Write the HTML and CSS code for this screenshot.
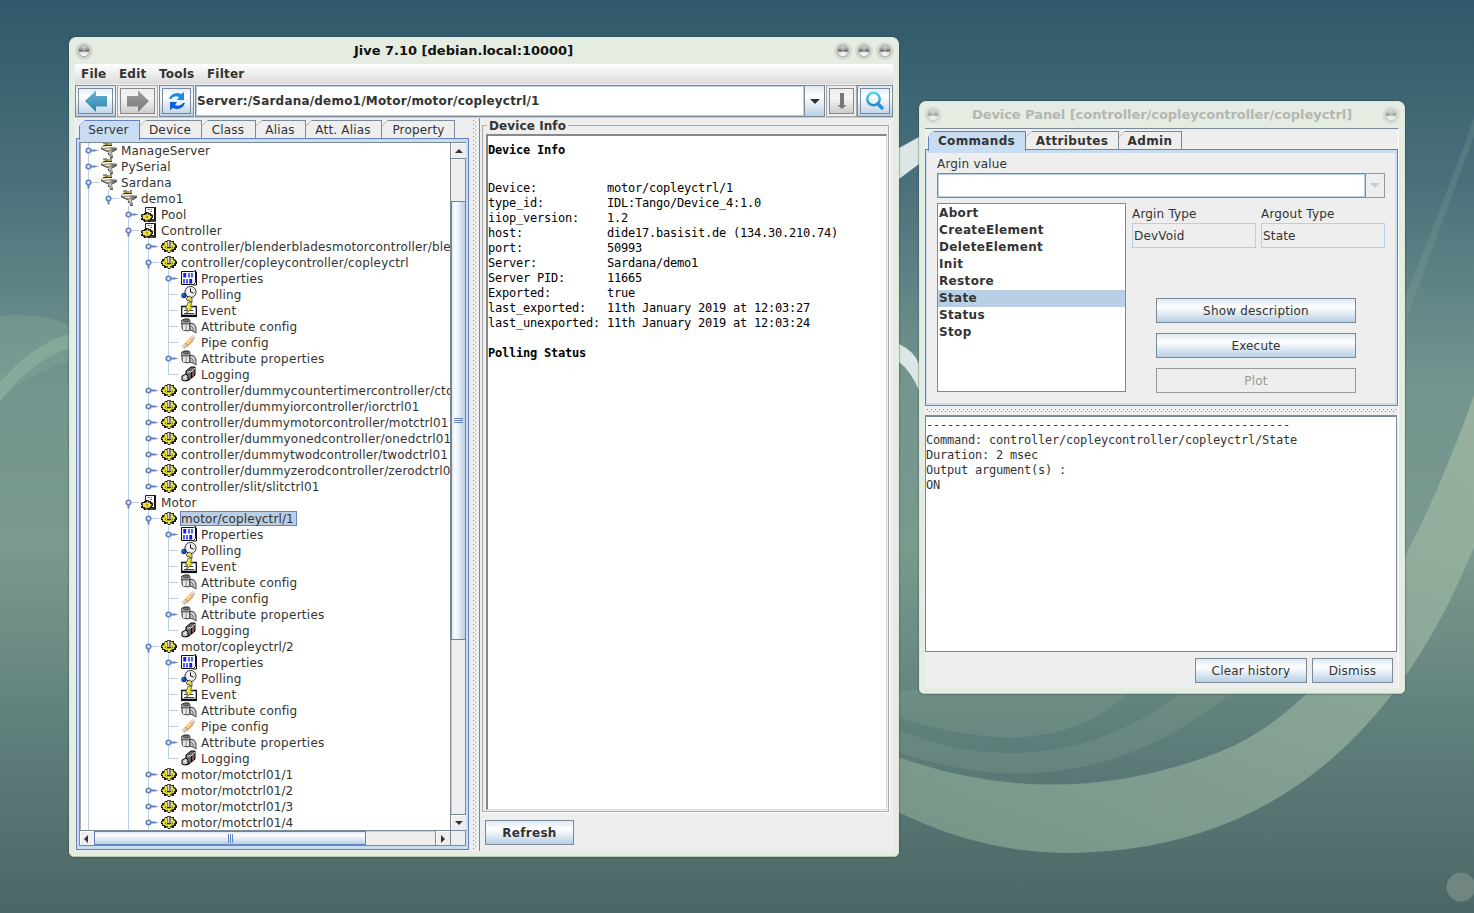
FILE: index.html
```html
<!DOCTYPE html>
<html lang="en">
<head>
<meta charset="utf-8">
<title>Jive 7.10</title>
<link rel="stylesheet" href="styles.css">
</head>
<body>
<svg class="wallpaper" viewBox="0 0 1474 913" preserveAspectRatio="none">
  <defs>
    <linearGradient id="sky" x1="0" y1="0" x2="0" y2="1"><stop offset="0" stop-color="#31586a"/><stop offset=".2" stop-color="#4a717b"/><stop offset=".42" stop-color="#74958f"/><stop offset=".6" stop-color="#7a9a8e"/><stop offset=".8" stop-color="#5f7f7b"/><stop offset="1" stop-color="#4b6765"/></linearGradient>
    <linearGradient id="band" x1="0" y1="1" x2="1" y2="0"><stop offset="0" stop-color="#7f9f8f"/><stop offset="1" stop-color="#a0b7a4"/></linearGradient>
    <linearGradient id="ball" x1="0" y1="0" x2="0" y2="1"><stop offset="0" stop-color="#d8d8d8"/><stop offset=".4" stop-color="#8a8a8a"/><stop offset=".5" stop-color="#555"/><stop offset=".6" stop-color="#ddd"/><stop offset="1" stop-color="#fff"/></linearGradient>
    <linearGradient id="blueArrow" x1="0" y1="0" x2="0" y2="1"><stop offset="0" stop-color="#6db3d2"/><stop offset="1" stop-color="#2a86b0"/></linearGradient>
    <linearGradient id="greyArrow" x1="0" y1="0" x2="0" y2="1"><stop offset="0" stop-color="#a0a0a0"/><stop offset="1" stop-color="#777"/></linearGradient>
    <linearGradient id="lens" x1="0" y1="0" x2="0" y2="1"><stop offset="0" stop-color="#58cfee"/><stop offset="1" stop-color="#268fd0"/></linearGradient>
  </defs>
  <rect width="1474" height="913" fill="url(#sky)"/>
  <path d="M0 316Q40 312 72 326V360Q25 375 0 400Z" fill="#86a898" opacity=".4"/>
  <path d="M0 383Q30 345 72 333V347Q28 362 0 402Z" fill="#9bbda5" opacity=".45"/>
  <path d="M898 757Q1060 815 1222 751Q1370 690 1474 395V547Q1350 853 1065 853Q980 852 898 812Z" fill="url(#band)" opacity=".8"/>
  <path d="M898 690H1130Q1090 735 1010 738Q950 735 898 717Z" fill="#91ae9b" opacity=".22"/>
  <path d="M898 730Q1050 790 1180 694H1230Q1080 815 898 752Z" fill="#91ae9b" opacity=".2"/>
  <path d="M1404 300Q1452 180 1474 118V136Q1440 230 1404 325Z" fill="#91ae9b" opacity=".2"/>
  <path d="M899 148L919 137V164L899 179ZM899 344Q914 351 919 364V390Q910 370 899 362Z" fill="#dce6e4"/>
  <circle cx="1461" cy="887" r="14.500" fill="#83958f" opacity=".65"/>
</svg>

<svg class="defs" width="0" height="0">
  <symbol id="closed" viewBox="0 0 17 16"><path d="M6 8.500h9" stroke="#b8cfe5"/><path d="M7 8.500h4.500" stroke="#6382bf" stroke-width="2"/><path d="M11 8.500h2" stroke="#6382bf"/><circle cx="4.500" cy="8.500" r="2.200" fill="#fff" stroke="#6382bf" stroke-width="1.700"/></symbol>
  <symbol id="opened" viewBox="0 0 17 16"><path d="M7 8.500h8" stroke="#b8cfe5"/><path d="M4.500 10v4.500" stroke="#6382bf" stroke-width="2"/><circle cx="4.500" cy="8.500" r="2.200" fill="#fff" stroke="#6382bf" stroke-width="1.700"/></symbol>
  <symbol id="leaf" viewBox="0 0 17 16"><path d="M4 8.500h10" stroke="#b8cfe5"/></symbol>
  <symbol id="tray" viewBox="0 0 16 16"><path d="M3 1h3v3H3zM7 1h3v3H7z" fill="#eee24a"/><path d="M2 1h2M5 0v3M6 2h2M9 0h1v3M2 3.500h9" stroke="#333" fill="none"/><path d="M0 4.500l10 .5 6 .5v2L11 10v2l1 1v2.500H9L7.500 12V9.500L2 8 0 6z" fill="#98948a"/><path d="M1 5.500l8 .5M4 7.500h5M9 9v4" stroke="#e6e2d8" fill="none"/><path d="M0 6.500l7.500 3.500M9 15.500h3M11 10l5-3M11 7h4M7.500 11v2" stroke="#55534d" fill="none" stroke-width="1.200"/></symbol>
  <symbol id="class" viewBox="0 0 16 16"><path d="M4.500 1.500h9v12h-9z" fill="#fff" stroke="#222"/><path d="M14.200 1v14H7" fill="none" stroke="#000" stroke-width="1.400"/><path d="M7 3.500h4M9 5.500h3" stroke="#3c55ff" stroke-dasharray="2 1"/><path d="M1 8h2V7h1l1-1h2l1 1h2v1l2 1v3h-1v2H9v2H7l-1-1-1 1H3l-1-2H0v-2h1v-1H0V9z" fill="#16150c"/><path d="M2 9h2V8l1 1 1.500-2 1 2 1.500-1v2l2 .5-1 1v1L9 12v2l-1-1-1 1.500-1-1L4.500 15 4 13H2v-2L1 10z" fill="#f1e334"/><path d="M5 11h2" stroke="#444"/></symbol>
  <symbol id="device" viewBox="0 0 16 16"><path d="M4 3h2V2h4v1h3v2l2 1v1h1v3h-1v2h-2v2h-2l-1-1-1 2H7l-1-2-1 1H3v-2H1v-2H0V7h1V5h2z" fill="#1e1d14"/><path d="M4 4h2v2h4V4h2v2l2 1v2h-1v2h-2v1H9.500L9 14H7l-.5-2H4v-1H2V9H1V7.500h2z" fill="#e9df3e"/><path d="M4.500 8v2h7V8" fill="none" stroke="#8d861a"/><path d="M6 2.500h4v6H6z" fill="#777"/><path d="M7.500 3v5" stroke="#ddd"/><path d="M6 9h4v1H6z" fill="#33322a"/></symbol>
  <symbol id="props" viewBox="0 0 16 16"><path d="M.5 1.500h12l2-1v12l-2 2H.5z" fill="#fff" stroke="#111"/><path d="M14 1l1.500 1v13H12" fill="none" stroke="#111"/><path d="M3 3.700h1.500v3H3zM8 3v4.500M11 3v4.500M3 9v4.500M6 9v4.500M9 9.700h1.500v3H9z" fill="none" stroke="#0b16f0" stroke-width="1.400"/></symbol>
  <symbol id="poll" viewBox="0 0 16 16"><circle cx="9.500" cy="6" r="5.600" fill="#f6f6f6" stroke="#333"/><circle cx="9.500" cy="6" r="4.200" fill="none" stroke="#777" stroke-width=".8" stroke-dasharray=".6 1.700"/><path d="M9.500 2.500V6l3 1" fill="none" stroke="#000"/><circle cx="3" cy="9.500" r="2.700" fill="#1730b8"/><path d="M1 9l2-2 .5 3z" fill="#1e9c32"/><path d="M5 13l3-3 3 2v4H9l-1-2-1 1z" fill="#f1e334" stroke="#111" stroke-width=".7"/></symbol>
  <symbol id="event" viewBox="0 0 16 16"><path d="M.7 4.500h14.600v9H.7z" fill="#fff" stroke="#111" stroke-width="1.300"/><path d="M0 14h16" stroke="#111" stroke-width="2.200"/><path d="M3 8.500h9M3 11.500h10" stroke="#444"/><path d="M7 .5h4L9.500 4.500H12l-7 8 2-5.500H4.500z" fill="#f3e739" stroke="#444" stroke-width=".7"/></symbol>
  <symbol id="attr" viewBox="0 0 16 16"><path d="M1 2l3-1h4l1 2v9l-2 1-5-1-1-2V7L0 4z" fill="#a9a9a9" stroke="#333" stroke-width=".9"/><path d="M2 7h2.500v5H2zM6 7h2v5H6z" fill="#e8e8e8"/><ellipse cx="5" cy="2.500" rx="3" ry="1.300" fill="#777" stroke="#333" stroke-width=".8"/><path d="M9 5l4 1 2 3v6l-3-2-3-1z" fill="#ccc" stroke="#333" stroke-width=".9"/><path d="M1 5.500h7M10 8l2 2v3" stroke="#555" stroke-width=".8" fill="none"/></symbol>
  <symbol id="pipe" viewBox="0 0 16 16"><path d="M2 13.500L13 2.500" stroke="#999" stroke-width="3.400"/><path d="M2 13L13 2" stroke="#e5e5e5" stroke-width="2"/><path d="M5 11.500l6-6" stroke="#f0a03c" stroke-width="4"/><path d="M6 9.500l4-4" stroke="#ffe0a5" stroke-width="2"/></symbol>
  <symbol id="log" viewBox="0 0 16 16"><path d="M5 5l5-4h4v8l-6 5-3 1z" fill="#666" stroke="#000"/><path d="M6 6h4l4-4" stroke="#ddd" fill="none"/><path d="M10.500 6v6" stroke="#000"/><path d="M12 5v5" stroke="#b24039"/><path d="M1 10l4-2 2 2v4l-3 1-3-1z" fill="#c9c9c9" stroke="#000"/><path d="M3 12l2-2" stroke="#fff"/></symbol>
  <symbol id="knob" viewBox="0 0 18 18"><circle cx="9" cy="9" r="8.800" fill="#000" opacity=".09"/><circle cx="9" cy="9" r="5.600" fill="url(#ball)" stroke="#aaa"/><path d="M9 4v9" stroke="#fff" stroke-width="3" opacity=".25"/></symbol>
</svg>

<main class="window jive">
  <header class="title"><svg><use href="#knob"/></svg><b>Jive 7.10 [debian.local:10000]</b><svg><use href="#knob"/></svg><svg><use href="#knob"/></svg><svg><use href="#knob"/></svg></header>
  <nav class="menu"><span>File</span><span>Edit</span><span>Tools</span><span>Filter</span></nav>
  <div class="toolbar">
    <div class="tool back"><i><svg width="24" height="24"><path d="M1 12L12 1.500V7H23V17.500H12V23Z" fill="url(#blueArrow)"/></svg></i></div>
    <div class="tool forward off"><i><svg width="24" height="24"><path d="M23 12L12 1.500V7H1V17.500H12V23Z" fill="url(#greyArrow)"/></svg></i></div>
    <div class="tool reload"><i><svg width="20" height="20"><path d="M2 8Q4 2 11 2l3 1 3-2v8H10l2-3Q7 4 4 8z" fill="#168be9"/><path d="M18 12Q16 18 9 18l-3-1-3 2v-8h7l-2 3q5 2 8-2z" fill="#0863d9"/></svg></i></div>
    <div class="path"><span>Server:/Sardana/demo1/Motor/motor/copleyctrl/1</span></div>
    <div class="drop"><svg width="10" height="5"><path d="M0 0H10L5 5Z"/></svg></div>
    <div class="tool down off"><i><svg width="12" height="18"><path d="M4 1h4v12h2.500L6 17 1.500 13H4z" fill="#777"/></svg></i></div>
    <div class="tool search"><i><svg width="20" height="20"><circle cx="8.500" cy="8" r="6.200" fill="none" stroke="url(#lens)" stroke-width="2.500"/><path d="M13 13l4 4" stroke="#2992d2" stroke-width="3.500" stroke-linecap="round"/></svg></i></div>
  </div>
  <div class="body">
    <section class="left">
      <div class="tabs"><span class="tab on">Server</span><span class="tab">Device</span><span class="tab">Class</span><span class="tab">Alias</span><span class="tab">Att. Alias</span><span class="tab">Property</span></div>
      <div class="pane">
        <div class="scroller">
          <div class="view">
            <ul class="tree">
              <li><p><svg><use href="#closed"/></svg><svg><use href="#tray"/></svg><span>ManageServer</span></p></li>
              <li><p><svg><use href="#closed"/></svg><svg><use href="#tray"/></svg><span>PySerial</span></p></li>
              <li class="more"><p><svg><use href="#opened"/></svg><svg><use href="#tray"/></svg><span>Sardana</span></p>
                <ul><li><p><svg><use href="#opened"/></svg><svg><use href="#tray"/></svg><span>demo1</span></p>
                  <ul>
                    <li><p><svg><use href="#closed"/></svg><svg><use href="#class"/></svg><span>Pool</span></p></li>
                    <li><p><svg><use href="#opened"/></svg><svg><use href="#class"/></svg><span>Controller</span></p>
                      <ul>
                        <li><p><svg><use href="#closed"/></svg><svg><use href="#device"/></svg><span>controller/blenderbladesmotorcontroller/blenderctrl</span></p></li>
                        <li><p><svg><use href="#opened"/></svg><svg><use href="#device"/></svg><span>controller/copleycontroller/copleyctrl</span></p>
                          <ul>
                            <li><p><svg><use href="#closed"/></svg><svg><use href="#props"/></svg><span>Properties</span></p></li>
                            <li><p><svg><use href="#leaf"/></svg><svg><use href="#poll"/></svg><span>Polling</span></p></li>
                            <li><p><svg><use href="#leaf"/></svg><svg><use href="#event"/></svg><span>Event</span></p></li>
                            <li><p><svg><use href="#leaf"/></svg><svg><use href="#attr"/></svg><span>Attribute config</span></p></li>
                            <li><p><svg><use href="#leaf"/></svg><svg><use href="#pipe"/></svg><span>Pipe config</span></p></li>
                            <li><p><svg><use href="#closed"/></svg><svg><use href="#attr"/></svg><span class="loose">Attribute properties</span></p></li>
                            <li><p><svg><use href="#leaf"/></svg><svg><use href="#log"/></svg><span>Logging</span></p></li>
                          </ul></li>
                        <li><p><svg><use href="#closed"/></svg><svg><use href="#device"/></svg><span>controller/dummycountertimercontroller/ctctrl01</span></p></li>
                        <li><p><svg><use href="#closed"/></svg><svg><use href="#device"/></svg><span class="tight">controller/dummyiorcontroller/iorctrl01</span></p></li>
                        <li><p><svg><use href="#closed"/></svg><svg><use href="#device"/></svg><span class="tight">controller/dummymotorcontroller/motctrl01</span></p></li>
                        <li><p><svg><use href="#closed"/></svg><svg><use href="#device"/></svg><span>controller/dummyonedcontroller/onedctrl01</span></p></li>
                        <li><p><svg><use href="#closed"/></svg><svg><use href="#device"/></svg><span class="tight">controller/dummytwodcontroller/twodctrl01</span></p></li>
                        <li><p><svg><use href="#closed"/></svg><svg><use href="#device"/></svg><span>controller/dummyzerodcontroller/zerodctrl01</span></p></li>
                        <li><p><svg><use href="#closed"/></svg><svg><use href="#device"/></svg><span class="tight">controller/slit/slitctrl01</span></p></li>
                      </ul></li>
                    <li class="more"><p><svg><use href="#opened"/></svg><svg><use href="#class"/></svg><span>Motor</span></p>
                      <ul>
                        <li><p><svg><use href="#opened"/></svg><svg><use href="#device"/></svg><span class="sel">motor/copleyctrl/1</span></p>
                          <ul>
                            <li><p><svg><use href="#closed"/></svg><svg><use href="#props"/></svg><span>Properties</span></p></li>
                            <li><p><svg><use href="#leaf"/></svg><svg><use href="#poll"/></svg><span>Polling</span></p></li>
                            <li><p><svg><use href="#leaf"/></svg><svg><use href="#event"/></svg><span>Event</span></p></li>
                            <li><p><svg><use href="#leaf"/></svg><svg><use href="#attr"/></svg><span>Attribute config</span></p></li>
                            <li><p><svg><use href="#leaf"/></svg><svg><use href="#pipe"/></svg><span>Pipe config</span></p></li>
                            <li><p><svg><use href="#closed"/></svg><svg><use href="#attr"/></svg><span class="loose">Attribute properties</span></p></li>
                            <li><p><svg><use href="#leaf"/></svg><svg><use href="#log"/></svg><span>Logging</span></p></li>
                          </ul></li>
                        <li><p><svg><use href="#opened"/></svg><svg><use href="#device"/></svg><span class="tight">motor/copleyctrl/2</span></p>
                          <ul>
                            <li><p><svg><use href="#closed"/></svg><svg><use href="#props"/></svg><span>Properties</span></p></li>
                            <li><p><svg><use href="#leaf"/></svg><svg><use href="#poll"/></svg><span>Polling</span></p></li>
                            <li><p><svg><use href="#leaf"/></svg><svg><use href="#event"/></svg><span>Event</span></p></li>
                            <li><p><svg><use href="#leaf"/></svg><svg><use href="#attr"/></svg><span>Attribute config</span></p></li>
                            <li><p><svg><use href="#leaf"/></svg><svg><use href="#pipe"/></svg><span>Pipe config</span></p></li>
                            <li><p><svg><use href="#closed"/></svg><svg><use href="#attr"/></svg><span class="loose">Attribute properties</span></p></li>
                            <li><p><svg><use href="#leaf"/></svg><svg><use href="#log"/></svg><span>Logging</span></p></li>
                          </ul></li>
                        <li><p><svg><use href="#closed"/></svg><svg><use href="#device"/></svg><span class="tight">motor/motctrl01/1</span></p></li>
                        <li><p><svg><use href="#closed"/></svg><svg><use href="#device"/></svg><span class="tight">motor/motctrl01/2</span></p></li>
                        <li><p><svg><use href="#closed"/></svg><svg><use href="#device"/></svg><span class="tight">motor/motctrl01/3</span></p></li>
                        <li class="more"><p><svg><use href="#closed"/></svg><svg><use href="#device"/></svg><span class="tight">motor/motctrl01/4</span></p></li>
                      </ul></li>
                  </ul></li></ul></li>
            </ul>
          </div>
          <div class="vbar"><div class="cap"><svg width="8" height="4"><path d="M0 4H8L4 0Z"/></svg></div><div class="gap1"></div><div class="thumb"><i></i></div><div class="rest"></div><div class="cap"><svg width="8" height="4"><path d="M0 0H8L4 4Z"/></svg></div></div>
          <div class="hbar"><div class="cap"><svg width="4" height="8"><path d="M4 0V8L0 4Z"/></svg></div><div class="thumb"><i></i></div><div class="rest"></div><div class="cap"><svg width="4" height="8"><path d="M0 0V8L4 4Z"/></svg></div></div>
          <div class="corner"></div>
        </div>
      </div>
    </section>
    <div class="splitter dots"></div>
    <section class="right">
      <fieldset><legend>Device Info</legend>
<pre class="mono info"><b>Device Info</b>
<i></i>
Device:          motor/copleyctrl/1
type_id:         IDL:Tango/Device_4:1.0
iiop_version:    1.2
host:            dide17.basisit.de (134.30.210.74)
port:            50993
Server:          Sardana/demo1
Server PID:      11665
Exported:        true
last_exported:   11th January 2019 at 12:03:27
last_unexported: 11th January 2019 at 12:03:24

<b>Polling Status</b></pre>
      </fieldset>
      <div class="btn bold refresh">Refresh</div>
    </section>
  </div>
</main>

<section class="window panel">
  <header class="title dim"><svg><use href="#knob"/></svg><b>Device Panel [controller/copleycontroller/copleyctrl]</b><svg><use href="#knob"/></svg></header>
  <div class="pbody">
    <div class="tabs bold"><span class="tab on">Commands</span><span class="tab">Attributes</span><span class="tab">Admin</span></div>
    <div class="commands">
      <label>Argin value</label>
      <div class="combo"><div class="entry"></div><div class="arrow"><svg width="10" height="5"><path d="M0 0H10L5 5Z"/></svg></div></div>
      <div class="cols">
        <div class="list"><span>Abort</span><span>CreateElement</span><span>DeleteElement</span><span>Init</span><span>Restore</span><span class="cur">State</span><span>Status</span><span>Stop</span></div>
        <div class="side">
          <div class="types"><div><label>Argin Type</label><div class="ro">DevVoid</div></div><div><label>Argout Type</label><div class="ro">State</div></div></div>
          <div class="acts"><div class="btn">Show description</div><div class="btn">Execute</div><div class="btn disabled">Plot</div></div>
        </div>
      </div>
    </div>
    <div class="hsplit dots"></div>
<pre class="mono out">----------------------------------------------------
Command: controller/copleycontroller/copleyctrl/State
Duration: 2 msec
Output argument(s) :
ON</pre>
    <footer><div class="btn clear">Clear history</div><div class="btn dismiss">Dismiss</div></footer>
  </div>
</section>
</body>
</html>
```
FILE: styles.css
```css
* { box-sizing: border-box; }
body { margin: 0; width: 1474px; height: 913px; overflow: hidden; font: 12px/16px "DejaVu Sans", sans-serif; letter-spacing: .18px; color: #333; position: relative; }
p, ul, pre, fieldset { margin: 0; padding: 0; }
svg { display: block; flex: none; }
.wallpaper { position: absolute; left: 0; top: 0; width: 1474px; height: 913px; }
.defs { position: absolute; }
.bold { font-weight: bold; }

.window { position: absolute; display: flex; flex-direction: column; border-radius: 7px 7px 5px 5px; background: #e5ede2; border: 1px solid #dfe8da; border-bottom-color: #bccbb0; box-shadow: 0 0 2px #23413f; }
.jive { left: 69px; top: 37px; width: 830px; height: 820px; padding: 0 5px 5px; }
.panel { left: 919px; top: 101px; width: 486px; height: 593px; padding: 0 5px 5px; }
.title { height: 26px; flex: none; display: flex; align-items: center; gap: 3px; }
.title svg { width: 18px; height: 18px; }
.title b { flex: 1; text-align: center; font-size: 13px; letter-spacing: 0; color: #111; }
.jive .title { margin-right: -1px; padding-bottom: 1px; }
.title.dim b { color: #b4b7b2; letter-spacing: -.06px; }
.title.dim svg { opacity: .6; }
.title.dim { margin: 0 -1px 0 -1px; }

.menu { height: 20px; flex: none; display: flex; gap: 12.5px; padding: 1px 6px; line-height: 18px; font-weight: bold; background: linear-gradient(#fff, #dadada); }
.menu span { letter-spacing: .22px; }
.toolbar { height: 34px; flex: none; display: flex; padding-top: 1px; background: #eee; border-bottom: 1px solid #b8cfe5; }
.tool { height: 32px; border: 1px solid #7a8a99; padding: 2px; margin-right: 1px; background: linear-gradient(#dde8f3, #fff 35%, #b8cfe5); }
.tool i { display: flex; height: 26px; align-items: center; justify-content: center; border: 1px solid #7a8a99; }
.tool.off { border-color: #aaa; background: #eee; }
.tool.off i { border-color: #888; background: linear-gradient(#eee, #f4f4f4 40%, #ccc); }
.back, .forward { width: 41px; }
.reload { width: 35px; }
.path { width: 610px; height: 32px; border: 1px solid #7a8a99; background: #fff; box-shadow: inset 0 0 0 1px #b8cfe5; padding-left: 1px; font-weight: bold; line-height: 30px; letter-spacing: .2px; }
.drop { width: 20px; height: 32px; margin-right: 1px; border: 1px solid #7a8a99; border-left: 0; background: linear-gradient(#dde8f3, #fff 35%, #b8cfe5); display: flex; align-items: center; justify-content: center; }
.drop path, .cap path { fill: #333; }
.down { width: 31px; margin-right: 0; }
.search { flex: 1; margin-right: 0; }

.body { flex: 1; min-height: 0; display: flex; background: #eee; }
.left { width: 395px; padding: 2px 1px 0; display: flex; flex-direction: column; }
.tabs { display: flex; height: 18px; flex: none; padding-left: 3px; }
.tab { height: 18px; flex: none; text-align: center; line-height: 18px; border: 1px solid #7a8a99; border-left-color: transparent; border-bottom: 0; background: linear-gradient(135deg, transparent 3.7px, #7a8a99 3.8px, #7a8a99 4.7px, #eee 4.8px) border-box; clip-path: polygon(6px 0, 100% 0, 100% 100%, 0 100%, 0 6px); }
.left .tab { padding-right: 2px; }
.tab.on { height: 20px; z-index: 1; border-color: #6382bf; background: linear-gradient(135deg, transparent 3.7px, #6382bf 3.8px, #6382bf 4.7px, #c8ddf2 4.8px) border-box; }
.left .tab:nth-child(1) { width: 61px; }
.left .tab:nth-child(2) { width: 62px; }
.left .tab:nth-child(3) { width: 54px; }
.left .tab:nth-child(4) { width: 50px; }
.left .tab:nth-child(5) { width: 76px; }
.left .tab:nth-child(6) { width: 73px; padding-right: 0; }
.pane { flex: 1; min-height: 0; border: 1px solid #6382bf; box-shadow: inset 0 0 0 3px #c8ddf2; padding: 3px 2px; margin-bottom: 1px; }
.scroller { height: 100%; display: grid; grid-template: 688px 15px / 370px 1fr; border: 1px solid #7a8a99; background: #eee; }
.view { background: #fff; overflow: hidden; border-left: 1px solid #aaa; border-bottom: 1px solid #7a8a99; }
.tree { margin: -1px 0 0 3px; }
.tree, .tree ul { list-style: none; }
.tree ul { margin-left: 20px; }
.tree li { background: linear-gradient(#b8cfe5, #b8cfe5) 4px 0 / 1px 100% no-repeat; }
.tree li:last-child { background-size: 1px 9px; }
.tree li.more { background-size: 1px 100%; }
.tree p { display: flex; height: 16px; white-space: nowrap; }
.tree p svg { width: 16px; height: 16px; }
.tree p svg:first-child { width: 17px; }
.tree span { height: 16px; line-height: 18px; padding: 0 3px 0 4px; }
.tree span.tight { letter-spacing: .12px; }
.tree span.loose { letter-spacing: .28px; }
.tree span.sel { height: 15px; margin: 1px 0 0 3px; padding: 0 2px 0 0; line-height: 14px; letter-spacing: .12px; border: 1px solid #6382bf; background: #b8cfe5; }
.vbar { display: flex; flex-direction: column; border-left: 1px solid #7a8a99; }
.cap { width: 15px; height: 15px; flex: none; display: flex; align-items: center; justify-content: center; background: #eee; border: 1px solid #fff; border-width: 1px 0 0 1px; box-shadow: 0 1px #7a8a99; }
.vbar .cap:last-child { box-shadow: 0 -1px #7a8a99, 0 1px #7a8a99; margin-bottom: 1px; }
.gap1 { height: 43px; }
.thumb { display: flex; align-items: center; justify-content: center; border: 1px solid #6382bf; }
.vbar .thumb { height: 439px; background: linear-gradient(90deg, #dde8f3, #fff 25%, #b8cfe5); }
.vbar .thumb i { width: 9px; height: 5px; background: repeating-linear-gradient(#6382bf 0 1px, transparent 1px 2px); }
.rest { flex: 1; border: 0 solid #b8cfe5; }
.vbar .rest { border-left-width: 1px; }
.hbar { display: flex; border-bottom: 1px solid #7a8a99; }
.hbar .cap { width: 14px; height: 14px; box-shadow: none; padding-right: 3px; }
.hbar .cap:last-child { box-shadow: -1px 0 #7a8a99; padding-right: 1px; }
.hbar .rest { border-top-width: 1px; }
.hbar .thumb { width: 272px; background: linear-gradient(#dde8f3, #fff 25%, #b8cfe5); }
.hbar .thumb i { width: 5px; height: 9px; background: repeating-linear-gradient(90deg, #6382bf 0 1px, transparent 1px 2px); }
.corner { border-left: 1px solid #7a8a99; border-bottom: 1px solid #7a8a99; }
.dots { background-image: conic-gradient(at 1px 1px, transparent 75%, #7a8a99 0), conic-gradient(at 1px 1px, transparent 75%, #7a8a99 0); background-size: 4px 4px; background-position: 0 0, 2px 2px; }
.splitter { width: 4px; margin: 2px 2px 2px 3px; }
.right { flex: 1; border-left: 1px solid #7a8a99; padding: 0 4px 0 2px; }
fieldset { height: 694px; border: 1px solid #aaa; box-shadow: 1px 1px #fff; padding: 1px 1px 1px 3px; min-width: 0; }
legend { font-weight: bold; line-height: 14px; padding: 1px 2px 0; margin-left: 1px; letter-spacing: .1px; }
.mono { font: 12px/15px "DejaVu Sans Mono", monospace; letter-spacing: -.225px; color: #333; }
.info { height: 676px; background: #fff; border: 2px solid #888; border-right: 1px solid #ddd; border-bottom: 1px solid #ddd; padding: 7px 0 0 0; color: #000; }
.info i { display: inline-block; height: 19px; }
.btn { height: 25px; line-height: 24px; text-align: center; border: 1px solid #7a8a99; background: linear-gradient(#dde8f3, #fff 35%, #b8cfe5); }
.refresh { width: 89px; margin: 8px 0 0 3px; letter-spacing: .3px; }

.pbody { flex: 1; display: flex; flex-direction: column; background: #eee; border-top: 1px solid #7a8a99; border-right: 1px solid #fff; padding-top: 2px; }
.panel .tabs { padding-left: 3px; }
.panel .tab { letter-spacing: .35px; padding-right: 1px; }
.panel .tab:nth-child(1) { width: 98px; }
.panel .tab:nth-child(2) { width: 93px; }
.panel .tab:nth-child(3) { width: 63px; }
.commands { height: 257px; border: 1px solid #6382bf; border-bottom-color: #7a8a99; box-shadow: inset 0 3px #c8ddf2, inset -2px 0 #c8ddf2, inset 0 -2px #c8ddf2, inset 1px 0 #c8ddf2; padding: 6px 12px 0 11px; }
label { display: block; height: 16px; }
.combo { display: flex; height: 25px; margin: 1px 0 5px; }
.entry { flex: 1; border: 1px solid #7a8a99; background: #fff; box-shadow: inset 0 0 0 1px #b8cfe5; }
.arrow { width: 19px; border: 1px solid #999; border-left: 0; display: flex; align-items: center; justify-content: center; }
.arrow path { fill: #b8cfe5; }
.cols { display: flex; gap: 6px; }
.list { width: 189px; height: 189px; background: #fff; border: 1px solid #7a8a99; display: flex; flex-direction: column; font-weight: bold; padding-top: 1px; letter-spacing: .35px; }
.list span { height: 17px; line-height: 17px; padding-left: 1px; }
.list .cur { background: #b8cfe5; }
.side { flex: 1; padding-top: 3px; }
.types { display: flex; gap: 5px; }
.types > div { width: 124px; }
.ro { height: 25px; margin-top: 1px; border: 1px solid #b8cfe5; padding-left: 1px; line-height: 24px; }
.acts { width: 200px; margin: 50px 0 0 24px; display: flex; flex-direction: column; gap: 10px; }
.disabled { background: #eee; border-color: #999; color: #999; }
.hsplit { height: 4px; margin: 3px 1px 2px 2px; }
.out { height: 237px; margin-right: 1px; background: #fff; border: 1px solid #7a8a99; border-top-width: 2px; padding-top: 1px; }
footer { display: flex; justify-content: flex-end; gap: 5px; padding: 6px 5px 0; }
.clear { width: 112px; }
.dismiss { width: 81px; }
```
